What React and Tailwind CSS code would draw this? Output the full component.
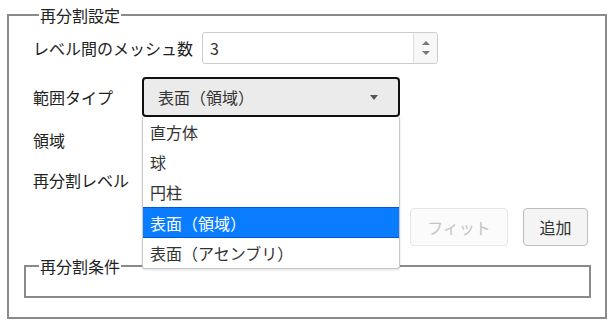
import { useState } from "react"

const options = ["直方体", "球", "円柱", "表面（領域）", "表面（アセンブリ）"]

const SettingsPanel = () => {
  const [selected] = useState("表面（領域）")

  return (
    <div className="w-[614px] h-[328px] bg-white text-[#222] text-[16px] leading-[20px] font-['Noto_Sans_CJK_JP','Noto_Sans',sans-serif]">
      <fieldset className="relative ml-[7px] mt-[5px] w-[598px] h-[314px] border-2 border-[#8a8a8a] pl-[16px] pr-[14px]">
        <legend className="ml-[14px] px-[1px]">再分割設定</legend>

        <div className="pl-[8px]">
          {/* mesh count */}
          <div className="flex items-center mt-[7px]">
            <span className="w-[169px] whitespace-nowrap">レベル間のメッシュ数</span>
            <div className="flex w-[236px] h-[32px] border border-[#ccc] rounded-[3px] bg-white">
              <span className="flex-1 flex items-center pl-[7px] text-[#333]">3</span>
              <div className="w-[24px] border-l border-[#ddd] bg-[#f7f7f7] flex flex-col items-center justify-center gap-[6px] rounded-r-[3px]">
                <span className="w-0 h-0 border-x-[4px] border-x-transparent border-b-[4px] border-b-[#777]" />
                <span className="w-0 h-0 border-x-[4px] border-x-transparent border-t-[4px] border-t-[#777]" />
              </div>
            </div>
          </div>

          {/* range type */}
          <div className="flex items-center mt-[13px]">
            <span className="w-[109px]">範囲タイプ</span>
            <div className="relative">
              <div className="flex items-center justify-between w-[258px] h-[40px] border-2 border-[#111] rounded-[4px] bg-[#ebebeb] pl-[14px] pr-[20px] text-[#333]">
                <span>{selected}</span>
                <span className="w-0 h-0 border-x-[4px] border-x-transparent border-t-[5px] border-t-[#555]" />
              </div>
              <ul className="absolute left-0 top-[40px] z-10 w-[258px] bg-white border border-[#c8c8c8] border-t-0 rounded-b-[3px] shadow-sm">
                {options.map((opt) => (
                  <li
                    key={opt}
                    className={
                      opt == selected
                        ? "h-[31px] flex items-center pl-[7px] bg-[#0a7cff] text-white border-y border-[#0057d8]"
                        : "h-[30px] flex items-center pl-[7px] text-[#333]"
                    }
                  >
                    {opt}
                  </li>
                ))}
              </ul>
            </div>
          </div>

          <div className="mt-[13px] h-[20px]">領域</div>
          <div className="mt-[20px] h-[20px]">再分割レベル</div>

          {/* buttons */}
          <div className="flex justify-end gap-[15px] mt-[18px] pr-[3px]">
            <button className="w-[98px] h-[38px] border border-[#e6e6e6] rounded-[4px] bg-[#fbfbfb] text-[#c4c4c4]" disabled>
              フィット
            </button>
            <button className="w-[65px] h-[38px] border border-[#bdbdbd] rounded-[4px] bg-[#f4f4f4] text-[#333]">
              追加
            </button>
          </div>
        </div>

        {/* inner fieldset */}
        <fieldset className="mt-[10px] -ml-[1px] w-[567px] h-[42px] border-2 border-[#8a8a8a]">
          <legend className="ml-[13px] px-[1px]">再分割条件</legend>
        </fieldset>
      </fieldset>
    </div>
  )
}

export default function App() {
  return <SettingsPanel />
}
